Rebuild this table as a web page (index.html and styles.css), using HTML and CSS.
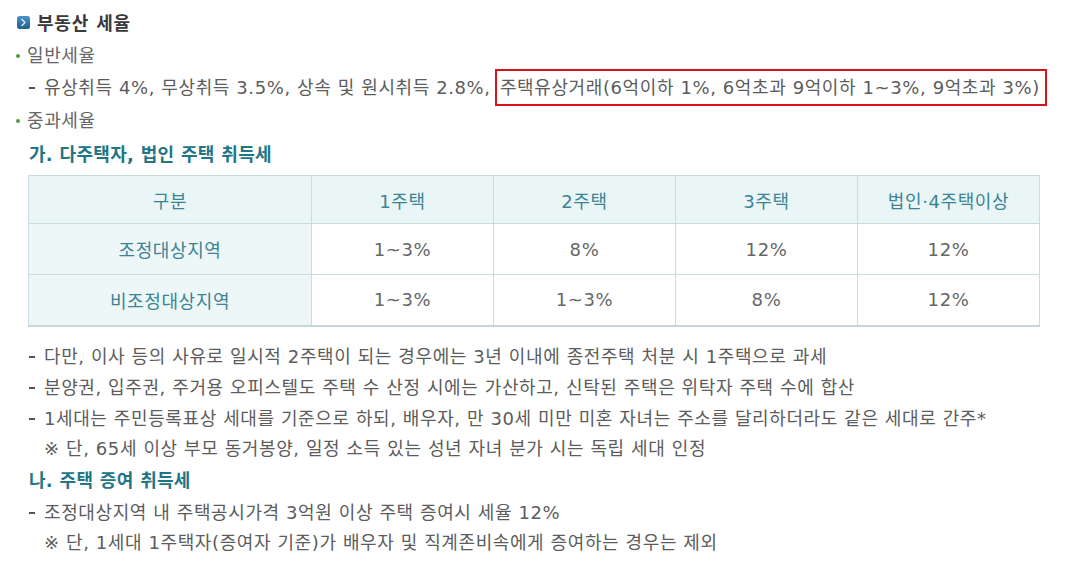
FILE: index.html
```html
<!DOCTYPE html>
<html lang="ko">
<head>
<meta charset="utf-8">
<title>부동산 세율</title>
<link rel="stylesheet" href="styles.css">
</head>
<body>
<div class="page">
  <h2 class="title">
    <svg class="title-icon" width="13" height="13" viewBox="0 0 13 13" aria-hidden="true">
      <defs>
        <linearGradient id="g" x1="0" y1="0" x2="0" y2="1">
          <stop offset="0" stop-color="#4d93c4"/>
          <stop offset="1" stop-color="#1f5f8e"/>
        </linearGradient>
      </defs>
      <rect x="0" y="0" width="13" height="13" rx="2.5" fill="url(#g)"/>
      <path d="M5 3.6 L8 6.5 L5 9.4" fill="none" stroke="#dff0fb" stroke-width="1.4" stroke-linecap="round" stroke-linejoin="round"/>
    </svg>
    <span>부동산 세율</span>
  </h2>

  <p class="bullet b1">일반세율</p>
  <p class="dash d1">유상취득 4%, 무상취득 3.5%, 상속 및 원시취득 2.8%, <span class="highlight">주택유상거래(6억이하 1%, 6억초과 9억이하 1~3%, 9억초과 3%)</span></p>
  <p class="bullet b2">중과세율</p>
  <h3 class="sub s1">가. 다주택자, 법인 주택 취득세</h3>

  <table class="rate">
    <colgroup>
      <col class="c0"><col class="c1"><col class="c1"><col class="c1"><col class="c1">
    </colgroup>
    <thead>
      <tr><th>구분</th><th>1주택</th><th>2주택</th><th>3주택</th><th>법인·4주택이상</th></tr>
    </thead>
    <tbody>
      <tr><th>조정대상지역</th><td>1~3%</td><td>8%</td><td>12%</td><td>12%</td></tr>
      <tr><th>비조정대상지역</th><td>1~3%</td><td>1~3%</td><td>8%</td><td>12%</td></tr>
    </tbody>
  </table>

  <p class="dash d2">다만, 이사 등의 사유로 일시적 2주택이 되는 경우에는 3년 이내에 종전주택 처분 시 1주택으로 과세</p>
  <p class="dash">분양권, 입주권, 주거용 오피스텔도 주택 수 산정 시에는 가산하고, 신탁된 주택은 위탁자 주택 수에 합산</p>
  <p class="dash">1세대는 주민등록표상 세대를 기준으로 하되, 배우자, 만 30세 미만 미혼 자녀는 주소를 달리하더라도 같은 세대로 간주*</p>
  <p class="note">※ 단, 65세 이상 부모 동거봉양, 일정 소득 있는 성년 자녀 분가 시는 독립 세대 인정</p>
  <h3 class="sub s2">나. 주택 증여 취득세</h3>
  <p class="dash d3">조정대상지역 내 주택공시가격 3억원 이상 주택 증여시 세율 12%</p>
  <p class="note">※ 단, 1세대 1주택자(증여자 기준)가 배우자 및 직계존비속에게 증여하는 경우는 제외</p>
</div>
</body>
</html>
```

FILE: styles.css
```css
* { box-sizing: border-box; }

html, body {
  margin: 0;
  padding: 0;
  background: #ffffff;
}

body {
  font-family: "DejaVu Sans", "Noto Sans CJK KR", "Noto Sans", sans-serif;
  font-size: 18px;
  letter-spacing: 0.6px;
  color: #5c5c5c;
}

.page {
  display: flex;
  flex-direction: column;
  align-items: flex-start;
  padding: 7px 0 0 0;
}

.title {
  display: flex;
  align-items: center;
  gap: 7px;
  margin: 0 0 0 17px;
  height: 30px;
  font-size: 18px;
  font-weight: 700;
  letter-spacing: 0.8px;
  color: #3a3a3a;
}

.title-icon { flex: none; margin-top: 1px; }

p { margin: 0; }

.bullet {
  position: relative;
  margin-left: 27px;
  line-height: 30px;
  color: #666;
}
.bullet::before {
  content: "";
  position: absolute;
  left: -11px;
  top: 13px;
  width: 4px;
  height: 4px;
  border-radius: 50%;
  background: #4f9a3c;
}
.b1 { margin-top: 4px; }
.b2 { margin-top: 3px; }

.dash {
  position: relative;
  margin-left: 44px;
  line-height: 31px;
  white-space: nowrap;
}
.dash::before {
  content: "";
  position: absolute;
  left: -15px;
  top: 15px;
  width: 6px;
  height: 2px;
  background: #555;
}
.d1 { margin-top: 1px; }
.d2 { margin-top: 14px; }
.d3 { margin-top: 1px; }

.highlight {
  border: 2px solid #d9121b;
  padding: 6px 5px 6px 3px;
  margin-left: -2px;
}

.note {
  margin-left: 44px;
  line-height: 30px;
  white-space: nowrap;
}

.sub {
  margin: 0 0 0 29px;
  font-size: 18px;
  font-weight: 700;
  letter-spacing: 0.3px;
  color: #217584;
  line-height: 30px;
}
.s1 { margin-top: 4px; }
.s2 { margin-top: 2px; }

.rate {
  margin: 5px 0 0 28px;
  width: 1012px;
  border-collapse: collapse;
  table-layout: fixed;
  border-top: 1px solid #c6dade;
  border-bottom: 2px solid #c3d6da;
}
.rate col.c0 { width: 283px; }
.rate col.c1 { width: 182px; }

.rate th, .rate td {
  border: 1px solid #c9dce0;
  text-align: center;
  font-weight: 400;
  padding: 0;
}
.rate thead th {
  height: 48px;
  background: #eaf5f6;
  color: #3b8494;
}
.rate tbody th {
  height: 51px;
  background: #eef7f8;
  color: #3b8494;
}
.rate tbody td {
  height: 51px;
  color: #666;
}
.rate tbody tr:last-child th,
.rate tbody tr:last-child td {
  border-bottom: 2px solid #c3d6da;
}
```
